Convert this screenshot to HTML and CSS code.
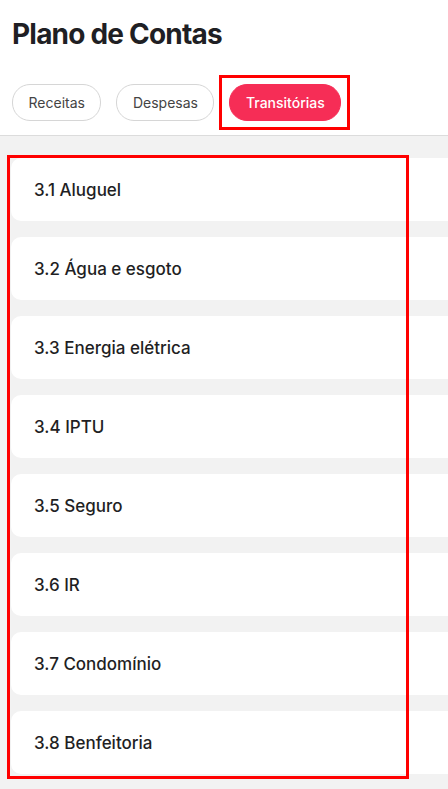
FILE: index.html
```html
<!DOCTYPE html>
<html lang="pt-BR">

<head>
    <meta charset="UTF-8">
    <meta name="viewport" content="width=device-width, initial-scale=1.0">
    <title>Plano de Contas</title>
    <link rel="stylesheet" href="styles.css">
</head>

<body>
    <header class="page-header">
        <h1>Plano de Contas</h1>
        <nav class="tabs">
            <a class="tab">Receitas</a>
            <a class="tab">Despesas</a>
            <a class="tab active">Transitórias</a>
        </nav>
        <div class="mark mark-tab"></div>
    </header>

    <main class="accounts">
        <div class="account">3.1 Aluguel</div>
        <div class="account">3.2 Água e esgoto</div>
        <div class="account">3.3 Energia elétrica</div>
        <div class="account">3.4 IPTU</div>
        <div class="account">3.5 Seguro</div>
        <div class="account">3.6 IR</div>
        <div class="account">3.7 Condomínio</div>
        <div class="account">3.8 Benfeitoria</div>
        <div class="mark mark-list"></div>
    </main>
</body>

</html>
```

FILE: styles.css
```css
body {
    font-family: Inter, "Noto Sans", sans-serif;
    margin: 0;
    padding: 0;
    color: #1f1f24;
    background-color: #f2f2f2;
    overflow: hidden;
    height: 789px;
}

.page-header {
    position: relative;
    background-color: #fff;
    padding: 17px 12px 14px;
    border-bottom: 1px solid #dcdcdc;
}

.page-header h1 {
    margin: 0;
    font-size: 28px;
    line-height: 34px;
    font-weight: 700;
    letter-spacing: -0.8px;
}

.tabs {
    display: flex;
    gap: 15px;
    margin-top: 33px;
}

.tab {
    display: flex;
    align-items: center;
    height: 35px;
    padding: 0 15.5px;
    border: 1px solid #d6d6d6;
    border-radius: 18px;
    font-size: 14px;
    color: #444;
}

.tab.active {
    background-color: #f62d56;
    border-color: #f62d56;
    color: #fff;
    font-weight: 500;
}

.accounts {
    position: relative;
    display: flex;
    flex-direction: column;
    gap: 16px;
    padding: 22px 0 0 11px;
}

.account {
    display: flex;
    align-items: center;
    height: 63px;
    padding-left: 23px;
    margin-right: -20px;
    background-color: #fff;
    border-radius: 10px;
    font-size: 17px;
    font-weight: 500;
}

/* red highlight boxes */
.mark {
    position: absolute;
    border: 3px solid #ff0000;
}

.mark-tab {
    left: 219px;
    top: 75px;
    width: 125px;
    height: 49px;
}

.mark-list {
    left: 7px;
    top: 19px;
    width: 396px;
    height: 618px;
}
```
